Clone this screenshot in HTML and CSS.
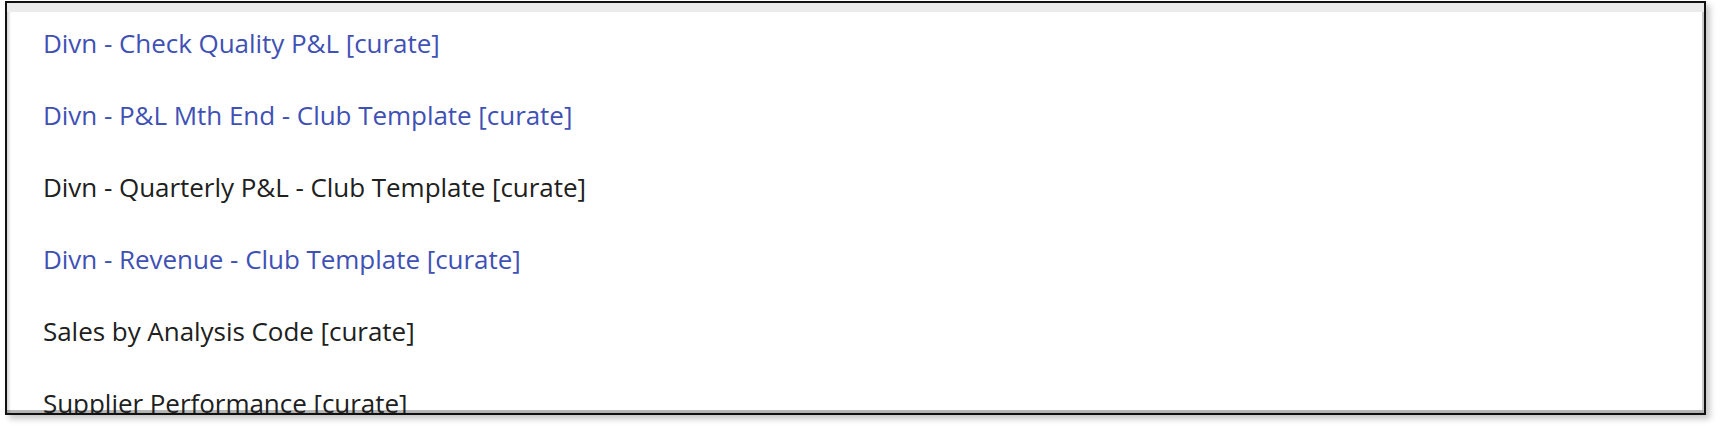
FILE: index.html
```html
<!DOCTYPE html>
<html>
<head>
<meta charset="utf-8">
<link rel="stylesheet" href="styles.css">
</head>
<body>
<div class="frame">
  <div class="band"></div>
  <ul class="list">
    <li class="item link">Divn - Check Quality P&amp;L [curate]</li>
    <li class="item link">Divn - P&amp;L Mth End - Club Template [curate]</li>
    <li class="item">Divn - Quarterly P&amp;L - Club Template [curate]</li>
    <li class="item link">Divn - Revenue - Club Template [curate]</li>
    <li class="item">Sales by Analysis Code [curate]</li>
    <li class="item">Supplier Performance [curate]</li>
  </ul>
</div>
</body>
</html>
```
FILE: styles.css
```css
html, body {
  margin: 0;
  padding: 0;
  background: #ffffff;
}
body {
  width: 1720px;
  height: 426px;
  overflow: hidden;
  font-family: "Open Sans", "Noto Sans", sans-serif;
}
.frame {
  margin: 1px 0 0 5px;
  width: 1697px;
  height: 410px;
  border: 2px solid #111;
  background: #fff;
  box-shadow: 4px 4px 6px rgba(0,0,0,0.22), inset 3px 0 3px -1px rgba(0,0,0,0.18), inset 0 -3px 0 #b8b8b8, inset -2px 0 0 #c8c8c8;
  overflow: hidden;
  display: flex;
  flex-direction: column;
}
.band {
  height: 9px;
  flex: none;
  background: #ebebeb;
}
.list {
  list-style: none;
  margin: 0;
  padding: 0 0 0 36px;
  flex: 1;
  overflow: hidden;
}
.item {
  height: 72px;
  line-height: 72px;
  font-size: 26px;
  letter-spacing: -0.04px;
  color: #202020;
  white-space: nowrap;
  margin-top: -5px;
  margin-bottom: 5px;
}
.item.link {
  color: #3f51b5;
}
```
